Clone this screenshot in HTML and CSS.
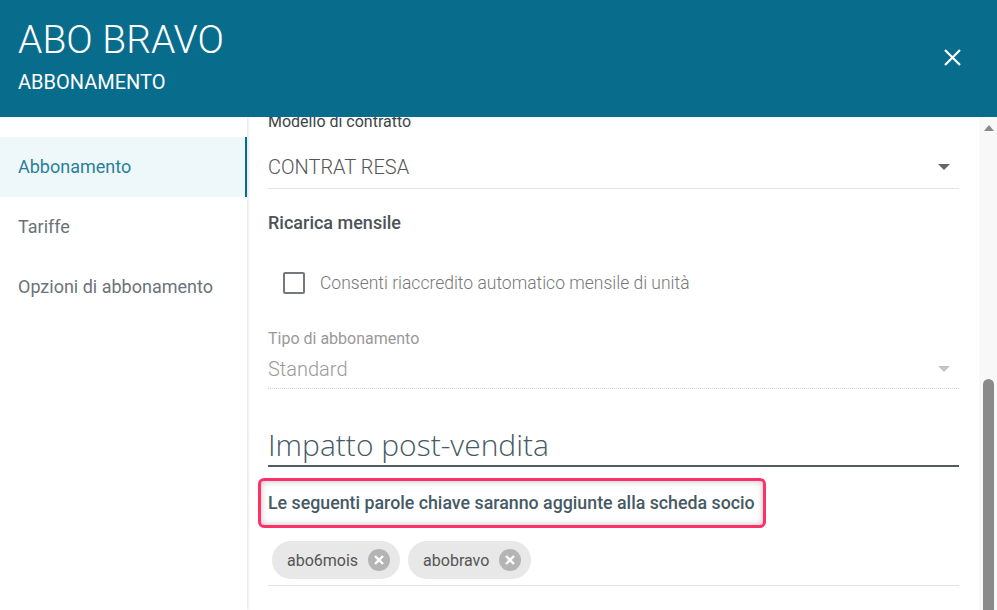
FILE: index.html
```html
<!DOCTYPE html>
<html lang="it">
<head>
  <meta charset="UTF-8">
  <meta name="viewport" content="width=device-width, initial-scale=1">
  <title>ABO BRAVO</title>
  <link rel="stylesheet" href="styles.css">
</head>
<body>

<div class="dialog">
  <header class="header">
    <div class="titles">
      <h1>ABO BRAVO</h1>
      <h2>ABBONAMENTO</h2>
    </div>
    <button class="close" aria-label="Chiudi">
      <svg width="17" height="17" viewBox="0 0 17 17"><path d="M1 1 L16 16 M16 1 L1 16" stroke="#fff" stroke-width="2.2"/></svg>
    </button>
  </header>

  <div class="body">
    <nav class="side">
      <a class="item active">Abbonamento</a>
      <a class="item">Tariffe</a>
      <a class="item">Opzioni di abbonamento</a>
    </nav>

    <main class="content">
      <div class="inner">
        <div class="field">
          <label class="label dark">Modello di contratto</label>
          <div class="select">
            <span>CONTRAT RESA</span>
            <span class="caret"></span>
          </div>
        </div>

        <h3 class="section">Ricarica mensile</h3>

        <label class="check">
          <span class="box"></span>
          <span>Consenti riaccredito automatico mensile di unità</span>
        </label>

        <div class="field disabled">
          <label class="label">Tipo di abbonamento</label>
          <div class="select">
            <span>Standard</span>
            <span class="caret"></span>
          </div>
        </div>

        <h2 class="big">Impatto post-vendita</h2>

        <div class="note">Le seguenti parole chiave saranno aggiunte alla scheda socio</div>

        <div class="chips">
          <span class="chip">abo6mois <span class="x"><svg width="22" height="22" viewBox="0 0 22 22"><circle cx="11" cy="11" r="11" fill="#b4b4b4"/><path d="M7 7 L15 15 M15 7 L7 15" stroke="#fff" stroke-width="2.4"/></svg></span></span>
          <span class="chip">abobravo <span class="x"><svg width="22" height="22" viewBox="0 0 22 22"><circle cx="11" cy="11" r="11" fill="#b4b4b4"/><path d="M7 7 L15 15 M15 7 L7 15" stroke="#fff" stroke-width="2.4"/></svg></span></span>
        </div>
      </div>
    </main>

    <div class="scrollbar">
      <span class="up"></span>
      <span class="thumb"></span>
    </div>
  </div>
</div>

</body>
</html>
```

FILE: styles.css
```css
body {
  margin: 0;
  padding: 0;
  font-family: Roboto, 'Liberation Sans', sans-serif;
  background: #fff;
  overflow: hidden;
}

.dialog {
  width: 997px;
  height: 610px;
  display: flex;
  flex-direction: column;
}

.header {
  height: 117px;
  flex-shrink: 0;
  background: #086d8c;
  color: #fff;
  display: flex;
  align-items: flex-start;
  justify-content: space-between;
  padding: 17px 36px 0 18px;
  box-sizing: border-box;
  position: relative;
  z-index: 2;
}

.header h1 {
  margin: 0;
  font-size: 39px;
  font-weight: 300;
  line-height: 46px;
}

.header h2 {
  margin: 7px 0 0;
  font-size: 20px;
  font-weight: 400;
  line-height: 24px;
}

.close {
  background: none;
  border: none;
  padding: 0;
  margin-top: 32px;
  cursor: pointer;
  display: flex;
}

.body {
  flex: 1;
  display: flex;
  min-height: 0;
}

.side {
  width: 247px;
  flex-shrink: 0;
  padding-top: 20px;
  box-shadow: 1px 0 3px rgba(0, 0, 0, 0.12);
  position: relative;
  z-index: 1;
}

.item {
  display: block;
  height: 60px;
  line-height: 60px;
  padding-left: 18px;
  font-size: 18px;
  color: #6b7378;
}

.item.active {
  background: #eef8fb;
  color: #2a7f98;
  border-right: 2px solid #086d8c;
}

.content {
  flex: 1;
  overflow: hidden;
  padding: 0 20px 0 21px;
}

.inner {
  margin-top: -5px;
}

.label {
  display: block;
  font-size: 16px;
  line-height: 20px;
  color: #999;
}

.label.dark {
  color: #3c4448;
}

.select {
  display: flex;
  align-items: center;
  justify-content: space-between;
  height: 42px;
  margin-top: 14px;
  border-bottom: 1px solid #e4e4e4;
  font-size: 20px;
  font-weight: 300;
  color: #555;
  padding-right: 9px;
}

.caret {
  width: 0;
  height: 0;
  border-left: 6px solid transparent;
  border-right: 6px solid transparent;
  border-top: 6px solid #666;
}

.section {
  margin: 22px 0 0;
  font-size: 18px;
  font-weight: 500;
  color: #4a5459;
  line-height: 24px;
}

.check {
  display: flex;
  align-items: center;
  gap: 15px;
  margin: 36px 0 0 15px;
  font-size: 17.5px;
  font-weight: 300;
  color: #777;
  line-height: 24px;
}

.box {
  width: 18px;
  height: 18px;
  border: 2px solid #75797b;
  border-radius: 2px;
}

.disabled {
  margin-top: 34px;
}

.disabled .select {
  margin-top: 0;
  height: 39px;
  color: #9a9a9a;
  border-bottom: 1px dotted #d0d0d0;
}

.disabled .caret {
  border-top-color: #c4c4c4;
}

.big {
  margin: 36px 0 0;
  font-family: 'Open Sans', sans-serif;
  font-size: 30px;
  font-weight: 300;
  color: #455a64;
  line-height: 40px;
  border-bottom: 2px solid #4f5d63;
}

.note {
  margin: 11px 0 0 -10px;
  width: 508px;
  box-sizing: border-box;
  padding: 11px 0 11px 7px;
  border: 3px solid #ff3168;
  border-radius: 6px;
  box-shadow: inset 0 0 6px rgba(0, 0, 0, 0.25);
  font-size: 17.8px;
  font-weight: 500;
  color: #455a64;
  line-height: 22px;
  white-space: nowrap;
}

.chips {
  display: flex;
  gap: 8px;
  padding: 13px 4px 6px;
  border-bottom: 1px solid #e4e4e4;
}

.chip {
  display: flex;
  align-items: center;
  gap: 10px;
  height: 38px;
  padding: 0 10px 0 15px;
  border-radius: 19px;
  background: #e8e8e8;
  font-size: 16px;
  color: #555;
}

.x {
  display: flex;
}

.scrollbar {
  width: 18px;
  flex-shrink: 0;
  background: #f8f8f8;
  position: relative;
}

.up {
  position: absolute;
  top: 8px;
  left: 5px;
  border-left: 5px solid transparent;
  border-right: 5px solid transparent;
  border-bottom: 6px solid #888;
}

.thumb {
  position: absolute;
  top: 262px;
  bottom: 0;
  left: 4px;
  width: 11px;
  border-radius: 6px 6px 0 0;
  background: #8a8a8a;
}
```
